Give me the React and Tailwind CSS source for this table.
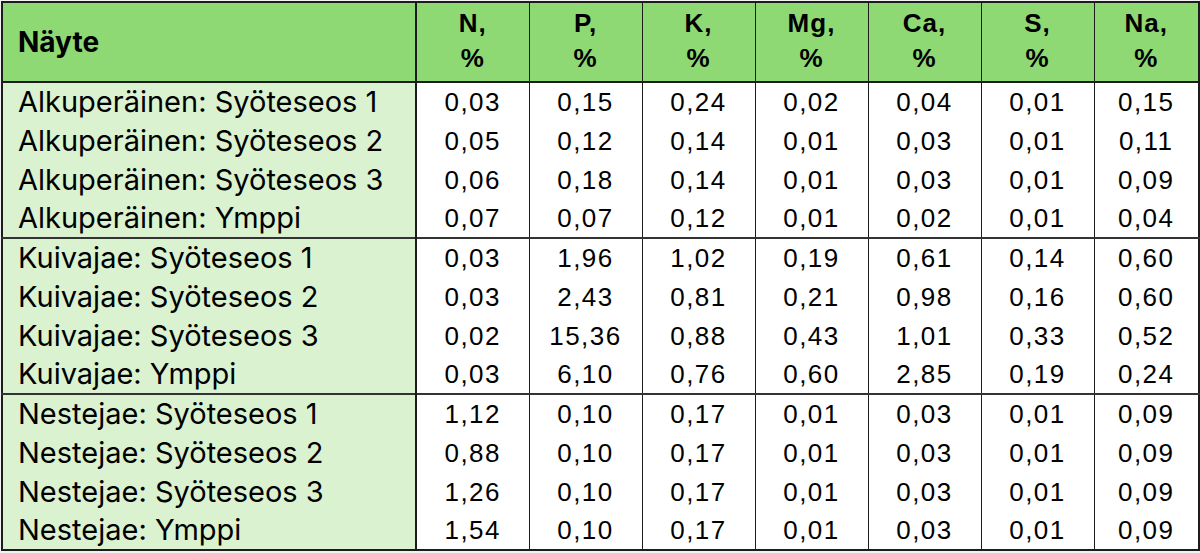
import React from "react";

const heads = ["N", "P", "K", "Mg", "Ca", "S", "Na"];

const groups = [
  [
    ["Alkuperäinen: Syöteseos 1", "0,03", "0,15", "0,24", "0,02", "0,04", "0,01", "0,15"],
    ["Alkuperäinen: Syöteseos 2", "0,05", "0,12", "0,14", "0,01", "0,03", "0,01", "0,11"],
    ["Alkuperäinen: Syöteseos 3", "0,06", "0,18", "0,14", "0,01", "0,03", "0,01", "0,09"],
    ["Alkuperäinen: Ymppi", "0,07", "0,07", "0,12", "0,01", "0,02", "0,01", "0,04"],
  ],
  [
    ["Kuivajae: Syöteseos 1", "0,03", "1,96", "1,02", "0,19", "0,61", "0,14", "0,60"],
    ["Kuivajae: Syöteseos 2", "0,03", "2,43", "0,81", "0,21", "0,98", "0,16", "0,60"],
    ["Kuivajae: Syöteseos 3", "0,02", "15,36", "0,88", "0,43", "1,01", "0,33", "0,52"],
    ["Kuivajae: Ymppi", "0,03", "6,10", "0,76", "0,60", "2,85", "0,19", "0,24"],
  ],
  [
    ["Nestejae: Syöteseos 1", "1,12", "0,10", "0,17", "0,01", "0,03", "0,01", "0,09"],
    ["Nestejae: Syöteseos 2", "0,88", "0,10", "0,17", "0,01", "0,03", "0,01", "0,09"],
    ["Nestejae: Syöteseos 3", "1,26", "0,10", "0,17", "0,01", "0,03", "0,01", "0,09"],
    ["Nestejae: Ymppi", "1,54", "0,10", "0,17", "0,01", "0,03", "0,01", "0,09"],
  ],
];

export default function App() {
  return (
    <div className="w-[1200px] h-[553px] bg-[#f2f2f2] pt-px pl-px">
      <table className="table-fixed border-collapse w-[1197px] text-black border-2 border-[#1c1c1c] font-['Liberation_Sans',Arial,sans-serif]">
        <colgroup>
          <col className="w-[414px]" />
          {heads.map((h, i) => (
            <col key={h} className={i === 6 ? "w-[105px]" : "w-[113px]"} />
          ))}
        </colgroup>
        <thead>
          <tr className="h-[80px] bg-[#8ed973]">
            <th className="text-left pl-[15px] text-[28px] leading-[30px] font-bold font-['Inter',sans-serif] border-r-2 border-b-2 border-[#1c1c1c]">
              Näyte
            </th>
            {heads.map((h) => (
              <th key={h} className="text-center text-[26px] leading-[35px] font-bold tracking-[1px] border-l border-b-2 border-[#1c1c1c] pb-[3px]">
                {h},<br />%
              </th>
            ))}
          </tr>
        </thead>
        <tbody>
          {groups.map((rows, gi) =>
            rows.map((r, ri) => (
              <tr
                key={r[0]}
                className={
                  "h-[39px] " +
                  (ri === 0 && gi > 0 ? "border-t-2 border-[#333]" : "")
                }
              >
                <td className="bg-[#daf2d0] pl-[15px] text-[29px] leading-[30px] font-['Inter',sans-serif] border-r-2 border-[#1c1c1c] whitespace-nowrap">
                  {r[0]}
                </td>
                {r.slice(1).map((v, i) => (
                  <td key={i} className="bg-white text-center text-[26px] leading-[30px] tracking-[1.5px] border-l border-[#1c1c1c]">
                    {v}
                  </td>
                ))}
              </tr>
            ))
          )}
        </tbody>
      </table>
    </div>
  );
}
